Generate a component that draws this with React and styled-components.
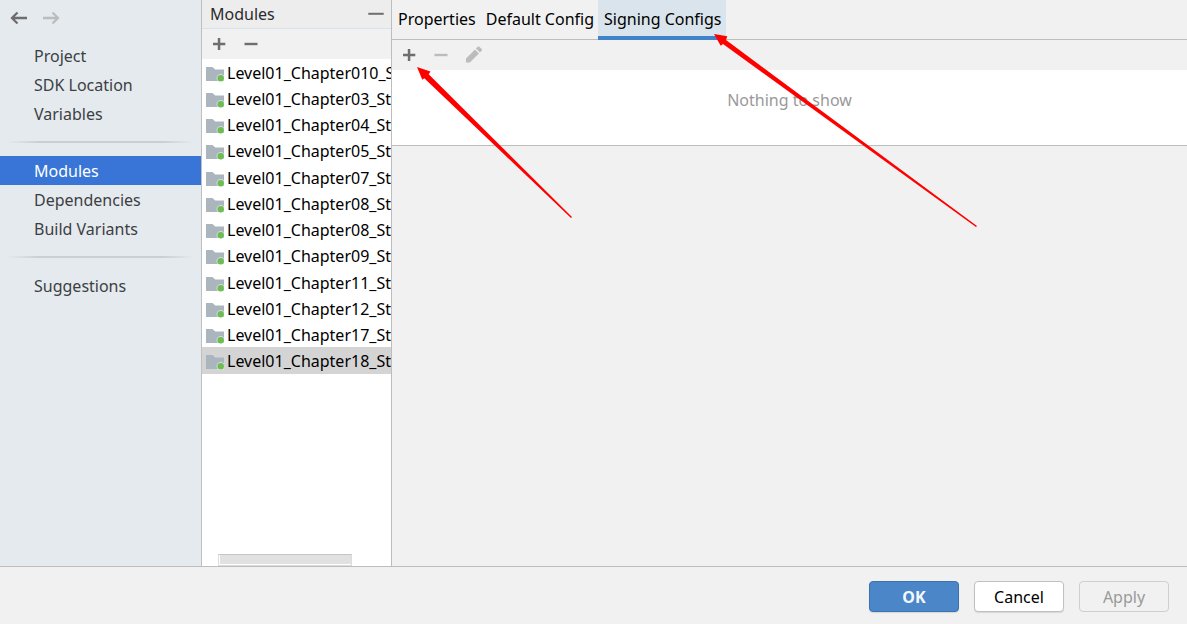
import React from "react";
import styled, { createGlobalStyle } from "styled-components";

const GlobalStyle = createGlobalStyle`
  * {
    box-sizing: border-box;
  }

  body {
    margin: 0;
    background: #f1f1f1;
  }

  body,
  button {
    font-family: "Noto Sans", "Open Sans", sans-serif;
    font-size: 16px;
    line-height: 22px;
  }
`;

const Dialog = styled.div`
  display: flex;
  flex-direction: column;
  min-height: 100vh;
  color: #000;
`;

const Body = styled.div`
  display: flex;
  flex: 1;
`;

const Sidebar = styled.nav`
  display: flex;
  flex-direction: column;
  flex: 0 0 202px;
  background: #e5eaee;
  border-right: 1px solid #bdbfc1;
`;

const History = styled.div`
  display: flex;
  gap: 15px;
  height: 41px;
  padding: 9px 10px;
`;

const IconButton = styled.button`
  display: flex;
  align-items: center;
  justify-content: center;
  width: 18px;
  height: 18px;
  padding: 0;
  border: none;
  background: none;
  color: #6e6e6e;

  &:disabled {
    color: #bcbcbc;
  }
`;

const NavLink = styled.a`
  height: 29px;
  padding: 4px 34px;
  white-space: nowrap;
  text-decoration: none;
  color: ${({ $active }) => ($active ? "#fff" : "#3c3f43")};
  background: ${({ $active }) => ($active ? "#3875d7" : "transparent")};
`;

const Separator = styled.hr`
  width: 187px;
  height: 2px;
  margin: 13px 7px;
  border: none;
  background: linear-gradient(
    to right,
    transparent,
    #cccfd1 32px,
    #cccfd1 156px,
    transparent
  );
`;

const ModulesPanel = styled.section`
  display: flex;
  flex-direction: column;
  flex: 0 0 190px;
  min-width: 0;
  background: #fff;
  border-right: 1px solid #bdbdbd;
`;

const PanelHeader = styled.header`
  display: flex;
  align-items: center;
  justify-content: space-between;
  height: 29px;
  padding: 0 6px 0 8px;
  background: #ededed;
  border-bottom: 1px solid #d6e3ed;
`;

const PanelTitle = styled.h2`
  margin: 0;
  font-size: 16px;
  font-weight: 400;
  color: #2b2b2b;
`;

const Toolbar = styled.div`
  display: flex;
  align-items: center;
  gap: 14px;
  height: 30px;
  padding: 0 8px;
  background: #f1f1f1;
`;

const ModuleList = styled.ul`
  flex: 1;
  margin: 0;
  padding: 0;
  list-style: none;
`;

const ModuleRow = styled.li`
  display: flex;
  align-items: flex-start;
  gap: 3px;
  height: 26px;
  padding: 3px 0 0 4px;
  overflow: hidden;
  white-space: nowrap;
  background: ${({ $selected }) => ($selected ? "#d4d4d4" : "transparent")};

  &:nth-child(4n) {
    height: 27px;
  }

  svg {
    flex: none;
    margin-top: 2px;
  }
`;

const ScrollThumb = styled.div`
  width: 134px;
  height: 12px;
  margin-left: 16px;
  background: #e1e1e1;
  border: 1px solid #dcdcdc;
  border-top-color: #c6c6c6;
  box-shadow: inset 1px -1px 0 #fff;
`;

const Details = styled.main`
  position: relative;
  flex: 1;
  min-width: 0;
`;

const Tabs = styled.div`
  display: flex;
  height: 40px;
  border-bottom: 1px solid #bdbdbd;
`;

const Tab = styled.button`
  height: 40px;
  padding: 0 4px 2px 6px;
  border: none;
  white-space: nowrap;
  color: #000;
  background: ${({ $active }) => ($active ? "#dae4ec" : "transparent")};
  box-shadow: ${({ $active }) => ($active ? "inset 0 -4px 0 #4083c9" : "none")};
`;

const EmptyList = styled.div`
  height: 76px;
  padding-top: 19px;
  text-align: center;
  color: #999;
  background: #fff;
  border-bottom: 1px solid #bdbdbd;
`;

const Arrows = styled.svg`
  position: absolute;
  top: 0;
  left: 0;
  pointer-events: none;
`;

const Footer = styled.footer`
  display: flex;
  justify-content: flex-end;
  gap: 15px;
  height: 58px;
  padding: 14px 18px 0 0;
  border-top: 1px solid #bdbdbd;
`;

const Button = styled.button`
  width: 90px;
  height: 31px;
  padding: 0;
  color: #000;
  background: #fff;
  border: 1px solid #c0c0c0;
  border-radius: 4px;
  box-shadow: 0 1px 1px #d8d8d8;

  &:disabled {
    color: #999;
    background: #f1f1f1;
    border-color: #cfcfcf;
    box-shadow: none;
  }
`;

const PrimaryButton = styled(Button)`
  font-weight: 700;
  color: #f4f8fc;
  background: #4a86c8;
  border-color: #3a72b4;
`;

const BackIcon = () => (
  <svg width="18" height="18" viewBox="0 0 18 18" fill="none" stroke="currentColor" strokeWidth="2.3">
    <path d="M17 9H2M7.5 3.5 2 9l5.5 5.5" />
  </svg>
);

const ForwardIcon = () => (
  <svg width="18" height="18" viewBox="0 0 18 18" fill="none" stroke="currentColor" strokeWidth="2.3">
    <path d="M0 9H15M9.5 3.5 15 9l-5.5 5.5" />
  </svg>
);

const PlusIcon = () => (
  <svg width="18" height="18" viewBox="0 0 18 18" fill="currentColor">
    <path d="M7.8 3h2.5v4.8h5v2.5h-5V15H7.8v-4.7H3V7.8h4.8z" />
  </svg>
);

const MinusIcon = () => (
  <svg width="18" height="18" viewBox="0 0 18 18" fill="currentColor">
    <path d="M2.5 7.8h13v2.4h-13z" />
  </svg>
);

const HideIcon = () => (
  <svg width="18" height="18" viewBox="0 0 18 18" fill="currentColor">
    <path d="M1.3 7.8h15.4v2H1.3z" />
  </svg>
);

const PencilIcon = () => (
  <svg width="18" height="18" viewBox="0 0 18 18" fill="currentColor">
    <path d="M2 12.6 11 3.6l3.9 3.9-9 9.1H2zM12 2.6 13.8.8q.8-.8 1.6 0l2.3 2.3q.8.8 0 1.6L15.9 6.5z" />
  </svg>
);

const FolderIcon = () => (
  <svg width="18" height="18" viewBox="0 0 18 18">
    <path d="M0 3h6.5l2.7 2.5H18V17H0z" fill="#aab5bd" />
    <circle cx="14.7" cy="14.3" r="4.2" fill="#fff" fillOpacity=".5" />
    <circle cx="14.7" cy="14.3" r="3.2" fill="#6cbe52" />
  </svg>
);

const navGroups = [
  ["Project", "SDK Location", "Variables"],
  ["Modules", "Dependencies", "Build Variants"],
  ["Suggestions"],
];

const modules = [
  "Level01_Chapter010_S",
  "Level01_Chapter03_St",
  "Level01_Chapter04_St",
  "Level01_Chapter05_St",
  "Level01_Chapter07_St",
  "Level01_Chapter08_St",
  "Level01_Chapter08_St",
  "Level01_Chapter09_St",
  "Level01_Chapter11_St",
  "Level01_Chapter12_St",
  "Level01_Chapter17_St",
  "Level01_Chapter18_St",
];

const tabs = ["Properties", "Default Config", "Signing Configs"];

export default function App() {
  return (
    <>
      <GlobalStyle />
      <Dialog>
        <Body>
          <Sidebar>
            <History>
              <IconButton aria-label="Back">
                <BackIcon />
              </IconButton>
              <IconButton aria-label="Forward" disabled>
                <ForwardIcon />
              </IconButton>
            </History>
            {navGroups.map((group, index) => (
              <React.Fragment key={group[0]}>
                {index > 0 && <Separator />}
                {group.map((name) => (
                  <NavLink key={name} href="#" $active={name === "Modules"}>
                    {name}
                  </NavLink>
                ))}
              </React.Fragment>
            ))}
          </Sidebar>

          <ModulesPanel>
            <PanelHeader>
              <PanelTitle>Modules</PanelTitle>
              <IconButton aria-label="Hide">
                <HideIcon />
              </IconButton>
            </PanelHeader>
            <Toolbar>
              <IconButton aria-label="Add module">
                <PlusIcon />
              </IconButton>
              <IconButton aria-label="Remove module">
                <MinusIcon />
              </IconButton>
            </Toolbar>
            <ModuleList>
              {modules.map((name, index) => (
                <ModuleRow key={index} $selected={index === modules.length - 1}>
                  <FolderIcon />
                  {name}
                </ModuleRow>
              ))}
            </ModuleList>
            <ScrollThumb />
          </ModulesPanel>

          <Details>
            <Tabs role="tablist">
              {tabs.map((name) => (
                <Tab
                  key={name}
                  role="tab"
                  aria-selected={name === "Signing Configs"}
                  $active={name === "Signing Configs"}
                >
                  {name}
                </Tab>
              ))}
            </Tabs>
            <Toolbar>
              <IconButton aria-label="Add signing config">
                <PlusIcon />
              </IconButton>
              <IconButton aria-label="Remove signing config" disabled>
                <MinusIcon />
              </IconButton>
              <IconButton aria-label="Rename signing config" disabled>
                <PencilIcon />
              </IconButton>
            </Toolbar>
            <EmptyList>Nothing to show</EmptyList>
            <Arrows width="600" height="240" viewBox="0 0 600 240" fill="#f00">
              <path d="M25 67 38.5 71.5 36.7 74.2 180 217 179 218 32.3 78.3 30.3 79.7z" />
              <path d="M322 34 335.3 36.3 334 40 585 226 584 227 331 44 328.7 45.7z" />
            </Arrows>
          </Details>
        </Body>

        <Footer>
          <PrimaryButton>OK</PrimaryButton>
          <Button>Cancel</Button>
          <Button disabled>Apply</Button>
        </Footer>
      </Dialog>
    </>
  );
}
